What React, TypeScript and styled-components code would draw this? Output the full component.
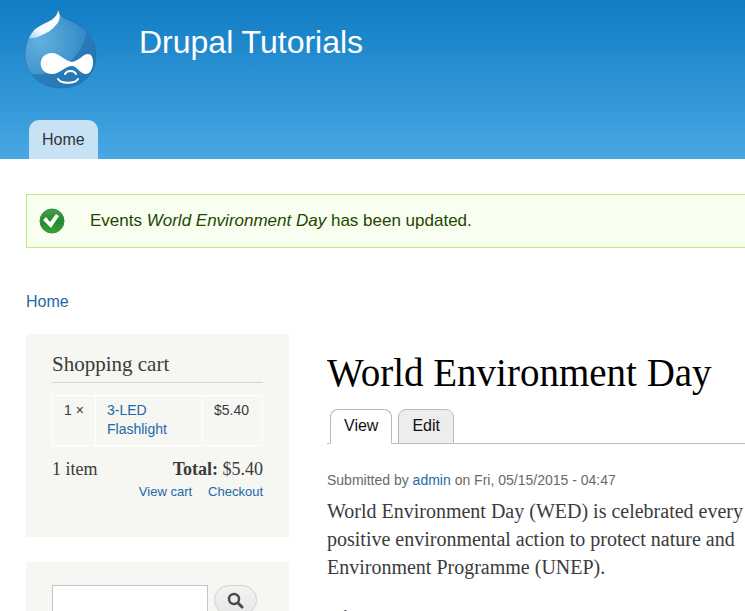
import React from "react";
import styled, { createGlobalStyle, css } from "styled-components";

const sans = `"Liberation Sans", Arial, Helvetica, sans-serif`;
const serif = `"Liberation Serif", Georgia, serif`;

const GlobalStyle = createGlobalStyle`
  *, *::before, *::after { box-sizing: border-box; }
  html, body { margin: 0; background: #fff; }
  html { overflow-x: hidden; scrollbar-width: none; }
  body { color: #3b3b3b; font-family: ${serif}; }
`;

const Header = styled.header`
  display: flex;
  flex-direction: column;
  justify-content: space-between;
  height: 159px;
  padding: 8px 24px 0;
  background: linear-gradient(#0f7cc4, #48a8e3);
  font-family: ${sans};
`;

const Brand = styled.div`
  display: flex;
  align-items: flex-start;
  gap: 42px;
`;

const LogoLink = styled.a`
  display: block;
  width: 73px;
  height: 81px;
`;

const SiteName = styled.a`
  padding-top: 15px;
  color: #fffeff;
  font-size: 32px;
  line-height: 38px;
  text-decoration: none;
`;

const MainMenu = styled.nav`
  display: flex;
  padding-left: 5px;
`;

const MenuTab = styled.a`
  padding: 8px 13px;
  border-radius: 10px 10px 0 0;
  background: #c7e2f5;
  color: #333;
  font-size: 16px;
  line-height: 23px;
  text-decoration: none;
`;

const Message = styled.div`
  display: flex;
  align-items: center;
  gap: 25px;
  height: 54px;
  margin: 35px 0 0 26px;
  padding-left: 12px;
  border: 1px solid #be7;
  border-right: 0;
  background: #f8fff0;
  color: #234600;
  font: 17px/20px ${sans};
  white-space: nowrap;
`;

const Link = styled.a`
  color: #2169a7;
  text-decoration: none;
`;

const Breadcrumb = styled.nav`
  margin: 44px 26px 0;
  font: 16px/20px ${sans};
`;

const Columns = styled.div`
  display: grid;
  grid-template-columns: 263px minmax(0, 1fr);
  gap: 38px;
  margin: 22px 0 0 26px;
`;

const Sidebar = styled.aside`
  display: flex;
  flex-direction: column;
  gap: 25px;
`;

const Block = styled.section`
  padding: 18px 26px 35px;
  background: #f6f6f2;
`;

const BlockTitle = styled.h2`
  margin: 0 0 12px;
  padding-bottom: 5px;
  border-bottom: 1px solid #d6d6d6;
  font-size: 21px;
  font-weight: normal;
  line-height: 25px;
`;

const CartTable = styled.table`
  width: 100%;
  border-collapse: collapse;
  table-layout: fixed;
  font: 14px/19px ${sans};
`;

const Column = styled.col<{ $width?: number }>`
  width: ${(p) => (p.$width ? `${p.$width}px` : "auto")};
`;

const Cell = styled.td`
  padding: 5px 11px 6px;
  border: 1px solid #fff;
  vertical-align: top;
  white-space: nowrap;
`;

const CartSummary = styled.div`
  display: flex;
  justify-content: space-between;
  margin-top: 12px;
  font-size: 18px;
  line-height: 22px;
`;

const CartLinks = styled.div`
  display: flex;
  justify-content: flex-end;
  gap: 16px;
  margin-top: 2px;
  font: 13px/20px ${sans};
`;

const SearchForm = styled.form`
  display: flex;
  align-items: flex-start;
  gap: 6px;
  padding-top: 5px;
`;

const SearchInput = styled.input`
  flex: 0 1 156px;
  min-width: 0;
  height: 30px;
  border: 1px solid #c3c3c9;
  background: #fff;
`;

const SearchButton = styled.button`
  display: grid;
  place-items: center;
  width: 43px;
  height: 30px;
  padding: 0;
  border: 1px solid #d2d2d2;
  border-radius: 15px;
  background: linear-gradient(#f3f3f3, #e6e6e6);
`;

const Content = styled.main`
  padding-top: 17px;
  overflow: hidden;
`;

const PageTitle = styled.h1`
  margin: 0;
  color: #000;
  font-size: 39px;
  font-weight: normal;
  line-height: 44px;
  white-space: nowrap;
`;

const Tabs = styled.nav`
  display: flex;
  gap: 6px;
  margin-top: 14px;
  padding-left: 3px;
  box-shadow: inset 0 -1px #bbb;
`;

const Tab = styled.a<{ $active?: boolean }>`
  padding: 6px 13px 7px;
  border: 1px solid #bbb;
  border-radius: 8px 8px 0 0;
  background: #ededed;
  color: #111;
  font: 16px/20px ${sans};
  text-decoration: none;
  ${(p) => p.$active && css`
    border-bottom-color: #fff;
    background: #fff;
  `}
`;

const Submitted = styled.p`
  margin: 26px 0 7px;
  color: #68696b;
  font: 14px/20px ${sans};
  white-space: nowrap;
`;

const Body = styled.div`
  font-size: 20px;
  line-height: 28px;
  white-space: nowrap;

  p { margin: 0; }
`;

const Subheading = styled.h3`
  margin: 23px 0 0;
  font-size: 20px;
  line-height: 28px;
`;

const dropShape =
  "M34 0c1 5 2 7 5 9 3 3 6 3 10 5 6 3 10 6 14 10 6 7 9 15 9 24 0 19-15 32-35 32S1 66 1 47c0-11 4-20 10-26 4-3 8-5 12-7 7-3 11-7 11-14Z";

const Drop = () => (
  <svg width="73" height="81" viewBox="0 0 73 81" aria-hidden="true">
    <defs>
      <linearGradient id="drop" x1="0" y1="0" x2="1" y2="1">
        <stop offset="0" stopColor="#2e86c2" />
        <stop offset="1" stopColor="#2474b0" />
      </linearGradient>
      <radialGradient id="glow" cx=".25" cy=".5" r=".75">
        <stop offset="0" stopColor="#62b0df" />
        <stop offset="1" stopColor="#3489c5" />
      </radialGradient>
      <linearGradient id="shine" x1="1" y1="0" x2="0" y2="1">
        <stop offset="0" stopColor="#fff" />
        <stop offset=".7" stopColor="#f3faff" />
        <stop offset="1" stopColor="#9bd0ef" />
      </linearGradient>
      <clipPath id="dropClip"><path d={dropShape} /></clipPath>
    </defs>
    <g clipPath="url(#dropClip)">
      <path fill="url(#drop)" d="M0 0h73v81H0z" />
      <path fill="url(#glow)" d="M0 0h63c2 23-2 41-18 55-12 11-28 13-45 10Z" />
      <path fill="url(#shine)" d="M34 1c3 7 2 12-2 16-4 5-9 8-14 10-4 2-9 4-13 3 0-4 3-8 6-10 4-3 8-4 12-6 6-3 10-6 11-13Z" />
    </g>
    <path fill="none" stroke="#1c68a2" d={dropShape} opacity=".4" />
    <path fill="#fff" d="M28 45c7 0 13 8 20 9 7-1 11-8 16-8 8 0 6 20-2 20-6 0-9-8-14-8-7 0-12 8-20 8-15 0-15-21 0-21Z" />
    <path fill="none" stroke="#fff" strokeWidth="2" strokeLinecap="round" d="M41 66c2-4 9-4 11 0M34 71c3 5 17 5 20 0" />
  </svg>
);

const Check = () => (
  <svg width="26" height="26" viewBox="0 0 26 26" aria-hidden="true">
    <defs>
      <linearGradient id="ok" x1="0" y1="0" x2="0" y2="1">
        <stop offset="0" stopColor="#4c9f52" />
        <stop offset=".5" stopColor="#218c2b" />
        <stop offset="1" stopColor="#35a537" />
      </linearGradient>
    </defs>
    <circle cx="13" cy="13" r="12" fill="url(#ok)" stroke="#3c8743" />
    <path fill="#fff" d="m4 12 3-3 4 5 6-8 3 2-8 12Z" />
  </svg>
);

const Magnifier = () => (
  <svg width="17" height="17" viewBox="0 0 17 17" fill="none" stroke="#4b4b4b" aria-hidden="true">
    <circle cx="7" cy="7" r="5" strokeWidth="2.5" />
    <path d="m11 11 4 4" strokeWidth="3" strokeLinecap="round" />
  </svg>
);

export default function App() {
  return (
    <>
      <GlobalStyle />
      <Header>
        <Brand>
          <LogoLink href="#" aria-label="Drupal Tutorials home"><Drop /></LogoLink>
          <SiteName href="#">Drupal Tutorials</SiteName>
        </Brand>
        <MainMenu aria-label="Main menu"><MenuTab href="#">Home</MenuTab></MainMenu>
      </Header>
      <Message role="status">
        <Check />
        <span>Events <em>World Environment Day</em> has been updated.</span>
      </Message>
      <Breadcrumb aria-label="Breadcrumb"><Link href="#">Home</Link></Breadcrumb>
      <Columns>
        <Sidebar>
          <Block>
            <BlockTitle>Shopping cart</BlockTitle>
            <CartTable>
              <colgroup>
                <Column $width={43} />
                <Column />
                <Column $width={60} />
              </colgroup>
              <tbody>
                <tr>
                  <Cell>1 ×</Cell>
                  <Cell><Link href="#">3-LED<br />Flashlight</Link></Cell>
                  <Cell>$5.40</Cell>
                </tr>
              </tbody>
            </CartTable>
            <CartSummary>
              <span>1 item</span>
              <span><strong>Total:</strong> $5.40</span>
            </CartSummary>
            <CartLinks>
              <Link href="#">View cart</Link>
              <Link href="#">Checkout</Link>
            </CartLinks>
          </Block>
          <Block>
            <SearchForm role="search">
              <SearchInput type="search" aria-label="Search" />
              <SearchButton type="button" aria-label="Search"><Magnifier /></SearchButton>
            </SearchForm>
          </Block>
        </Sidebar>
        <Content>
          <PageTitle>World Environment Day</PageTitle>
          <Tabs aria-label="Page tabs">
            <Tab href="#" $active>View</Tab>
            <Tab href="#">Edit</Tab>
          </Tabs>
          <Submitted>Submitted by <Link href="#">admin</Link> on Fri, 05/15/2015 - 04:47</Submitted>
          <Body>
            <p>
              World Environment Day (WED) is celebrated every<br />
              positive environmental action to protect nature and<br />
              Environment Programme (UNEP).
            </p>
            <Subheading>Hi</Subheading>
          </Body>
        </Content>
      </Columns>
    </>
  );
}
